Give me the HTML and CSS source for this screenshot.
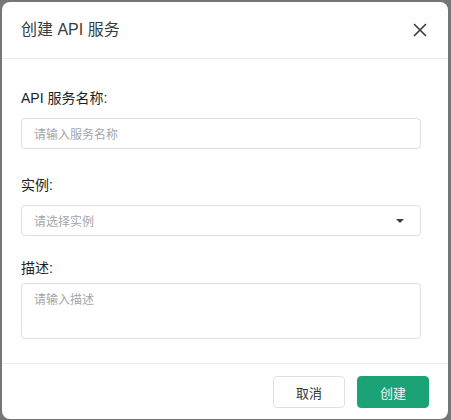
FILE: index.html
```html
<!DOCTYPE html>
<html lang="zh-CN">
<head>
<meta charset="utf-8">
<link rel="stylesheet" href="styles.css">
</head>
<body>
<div class="modal">
  <div class="modal-header">
    <h2 class="modal-title">创建 API 服务</h2>
    <button class="close-btn" aria-label="关闭">
      <svg width="14" height="14" viewBox="0 0 14 14"><path d="M1.5 1.5 L12.5 12.5 M12.5 1.5 L1.5 12.5" stroke="#3a3f47" stroke-width="1.7" stroke-linecap="round" fill="none"/></svg>
    </button>
  </div>
  <div class="modal-body">
    <div class="field field-first">
      <label class="label">API 服务名称:</label>
      <div class="control input">请输入服务名称</div>
    </div>
    <div class="field field-second">
      <label class="label">实例:</label>
      <div class="control select"><span>请选择实例</span><span class="caret"></span></div>
    </div>
    <div class="field field-third">
      <label class="label">描述:</label>
      <div class="control textarea">请输入描述</div>
    </div>
  </div>
  <div class="modal-footer">
    <button class="btn btn-cancel">取消</button>
    <button class="btn btn-primary">创建</button>
  </div>
</div>
</body>
</html>
```
FILE: styles.css
```css
* { box-sizing: border-box; }
html, body { margin: 0; padding: 0; }
body {
  background: #767676;
  width: 451px;
  height: 420px;
  overflow: hidden;
  font-family: "Liberation Sans", "Noto Sans CJK SC", sans-serif;
  padding: 2px 3px 0 2px;
}
.modal {
  background: #fff;
  border-radius: 8px;
  width: 446px;
  height: 417px;
  display: flex;
  flex-direction: column;
  overflow: hidden;
}
.modal-header {
  height: 57px;
  border-bottom: 1px solid #e9ebee;
  display: flex;
  align-items: center;
  justify-content: space-between;
  padding: 0 20px 0 19px;
}
.modal-title {
  margin: 0;
  font-size: 16px;
  font-weight: 400;
  color: #373c44;
  line-height: 20px;
  padding-top: 0;
}
.close-btn {
  border: 0;
  background: transparent;
  padding: 0;
  width: 16px;
  height: 16px;
  display: flex;
  align-items: center;
  justify-content: center;
  margin-top: 0;
}
.modal-body {
  padding: 29px 27px 24px 19px;
  border-bottom: 1px solid #e9ebee;
}
.field { display: flex; flex-direction: column; }
.field-second { margin-top: 26px; }
.field-third { margin-top: 22px; }
.label {
  font-size: 14px;
  line-height: 20px;
  color: #222;
  margin-bottom: 10px;
}
.field-third .label { margin-bottom: 5px; }
.control {
  border: 1px solid #dcdfe4;
  border-radius: 4px;
  font-size: 12px;
  color: #a3a6ab;
  padding: 0 12px;
  width: 400px;
}
.input, .select {
  height: 31px;
  display: flex;
  align-items: center;
}
.select { justify-content: space-between; padding-right: 16px; }
.caret {
  width: 0; height: 0;
  border-left: 4px solid transparent;
  border-right: 4px solid transparent;
  border-top: 4px solid #3a3f47;
  margin-top: 1px;
}
.textarea {
  height: 56px;
  padding-top: 7px;
  line-height: 18px;
}
.modal-footer {
  flex: 1;
  display: flex;
  justify-content: flex-end;
  align-items: flex-start;
  gap: 12px;
  padding: 12px 19px 0 0;
}
.btn {
  width: 72px;
  height: 32px;
  border-radius: 4px;
  font-family: inherit;
  font-size: 13px;
  cursor: pointer;
}
.btn-cancel {
  background: #fff;
  border: 1px solid #dcdfe4;
  color: #333;
}
.btn-primary {
  background: #1ba276;
  border: 1px solid #1ba276;
  color: #eefaf4;
}
```
